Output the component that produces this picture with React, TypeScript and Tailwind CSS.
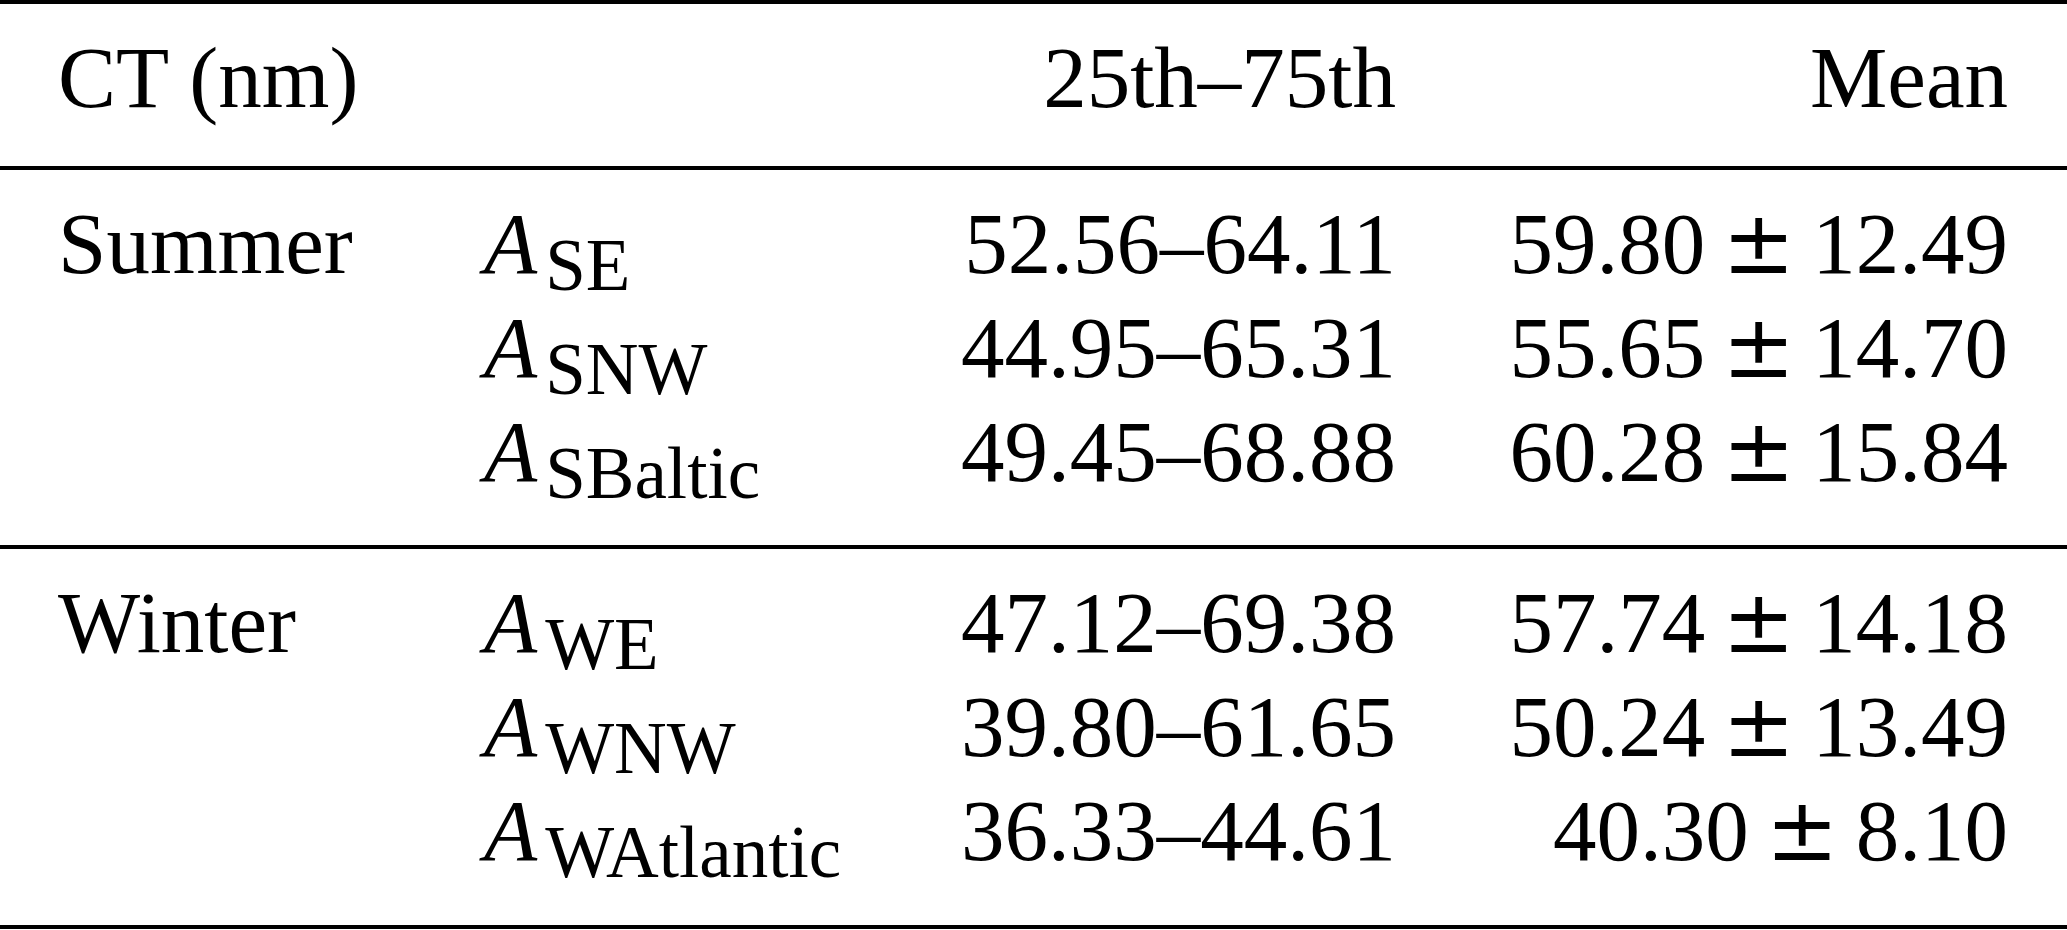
import React from "react";

const COLS = "grid grid-cols-[426px_400px_512px_612px]";

type Row = { sub: string; range: string; mean: string; sd: string };

const summer: Row[] = [
  { sub: "SE", range: "52.56–64.11", mean: "59.80", sd: "12.49" },
  { sub: "SNW", range: "44.95–65.31", mean: "55.65", sd: "14.70" },
  { sub: "SBaltic", range: "49.45–68.88", mean: "60.28", sd: "15.84" },
];

const winter: Row[] = [
  { sub: "WE", range: "47.12–69.38", mean: "57.74", sd: "14.18" },
  { sub: "WNW", range: "39.80–61.65", mean: "50.24", sd: "13.49" },
  { sub: "WAtlantic", range: "36.33–44.61", mean: "40.30", sd: "8.10" },
];

function Group({ label, rows }: { label: string; rows: Row[] }) {
  return (
    <div className="border-t-4 border-black pt-[22px] pl-[58px] pr-[59px]">
      {rows.map((r, i) => (
        <div key={r.sub} className={COLS}>
          <div>{i === 0 ? label : ""}</div>
          <div className="whitespace-nowrap">
            <span className="italic">A</span>
            <span className="ml-[8px] text-[73px] leading-[0] align-[-17px]">{r.sub}</span>
          </div>
          <div className="text-right whitespace-nowrap">{r.range}</div>
          <div className="text-right whitespace-nowrap">
            <span>{r.mean}</span>
            <span className="mx-[17px] font-['DejaVu_Serif',serif] font-light leading-[0]">±</span>
            <span>{r.sd}</span>
          </div>
        </div>
      ))}
    </div>
  );
}

export default function App() {
  return (
    <div className="w-[2067px] h-[930px] bg-white text-black font-['Liberation_Serif','Times_New_Roman',serif] text-[87px] leading-[104px]">
      <div className="border-t-4 border-black pt-[22px] pb-[36px] pl-[58px] pr-[59px]">
        <div className={COLS}>
          <div className="col-span-2 whitespace-nowrap">CT (nm)</div>
          <div className="text-right whitespace-nowrap">25th–75th</div>
          <div className="text-right whitespace-nowrap">Mean</div>
        </div>
      </div>
      <div className="pb-[41px]">
        <Group label="Summer" rows={summer} />
      </div>
      <div className="pb-[42px] border-b-4 border-black">
        <Group label="Winter" rows={winter} />
      </div>
    </div>
  );
}
